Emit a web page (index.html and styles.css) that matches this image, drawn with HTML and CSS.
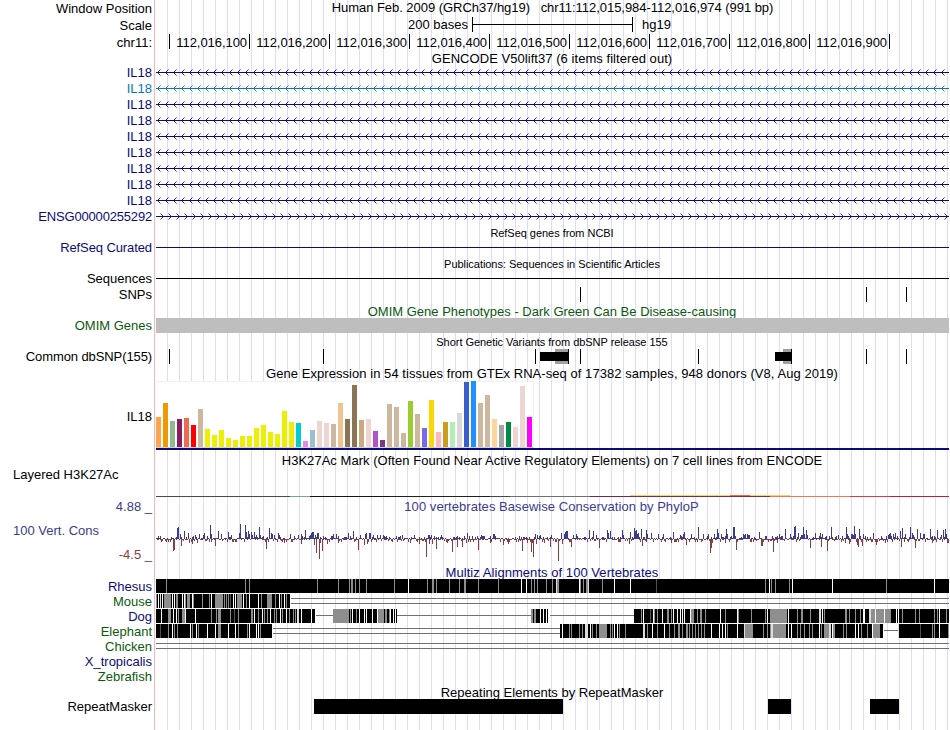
FILE: index.html
```html
<!doctype html>
<html>
<head>
  <meta charset="utf-8">
  <title>Human chr11:112,015,984-112,016,974</title>
  <link rel="stylesheet" href="styles.css">
</head>
<body>
<div class="browser">
  <div class="row position-row">
    <div class="label">Window Position</div>
    <div class="track center position-text">Human Feb. 2009 (GRCh37/hg19) &nbsp; chr11:112,015,984-112,016,974 (991 bp)</div>
  </div>
  <div class="row scale-row">
    <div class="label">Scale</div>
    <div class="track scale">
      <span class="scale-size">200 bases</span>
      <span class="scale-bar"></span>
      <span>hg19</span>
    </div>
  </div>
  <div class="row ruler-row">
    <div class="label">chr11:</div>
    <div class="track ruler">
      <span class="first"></span>
      <span>112,016,100</span>
      <span>112,016,200</span>
      <span>112,016,300</span>
      <span>112,016,400</span>
      <span>112,016,500</span>
      <span>112,016,600</span>
      <span>112,016,700</span>
      <span>112,016,800</span>
      <span>112,016,900</span>
    </div>
  </div>

  <div class="title gencode-title wide">GENCODE V50lift37 (6 items filtered out)</div>
  <div class="row navy"><div class="label">IL18</div><svg class="track gene" data-dir="left"></svg></div>
  <div class="row blue"><div class="label">IL18</div><svg class="track gene" data-dir="left"></svg></div>
  <div class="row navy"><div class="label">IL18</div><svg class="track gene" data-dir="left"></svg></div>
  <div class="row navy"><div class="label">IL18</div><svg class="track gene" data-dir="left"></svg></div>
  <div class="row navy"><div class="label">IL18</div><svg class="track gene" data-dir="left"></svg></div>
  <div class="row navy"><div class="label">IL18</div><svg class="track gene" data-dir="left"></svg></div>
  <div class="row navy"><div class="label">IL18</div><svg class="track gene" data-dir="left"></svg></div>
  <div class="row navy"><div class="label">IL18</div><svg class="track gene" data-dir="left"></svg></div>
  <div class="row navy"><div class="label">IL18</div><svg class="track gene" data-dir="left"></svg></div>
  <div class="row navy"><div class="label tighter">ENSG00000255292</div><svg class="track gene" data-dir="right"></svg></div>

  <div class="title small">RefSeq genes from NCBI</div>
  <div class="row navy"><div class="label tight">RefSeq Curated</div><svg class="track gene"></svg></div>

  <div class="title small">Publications: Sequences in Scientific Articles</div>
  <div class="row"><div class="label">Sequences</div><svg class="track gene"></svg></div>
  <div class="row">
    <div class="label">SNPs</div>
    <svg class="track" viewBox="156 0 793 16">
      <path d="M580 1h1v15h-1zM866 1h1v15h-1zM906 1h1v15h-1z"/>
    </svg>
  </div>

  <div class="title green">OMIM Gene Phenotypes - Dark Green Can Be Disease-causing</div>
  <div class="row green"><div class="label">OMIM Genes</div><div class="track omim"></div></div>

  <div class="title small">Short Genetic Variants from dbSNP release 155</div>
  <div class="row">
    <div class="label tight">Common dbSNP(155)</div>
    <svg class="track" viewBox="156 0 793 16">
      <path fill="#a0a0a0" d="M555 1h13v15h-13zM783 1h8v15h-8z"/>
      <path d="M540 4h28v9h-28zM775 4h16v9h-16z"/>
      <path d="M169 1h1v15h-1zM323 1h1v15h-1zM535 1h1v15h-1zM568 1h1v15h-1zM580 1h1v15h-1zM698 1h1v15h-1zM791 1h1v15h-1zM866 1h1v15h-1zM906 1h1v15h-1z"/>
    </svg>
  </div>

  <div class="title gtex-title wide">Gene Expression in 54 tissues from GTEx RNA-seq of 17382 samples, 948 donors (V8, Aug 2019)</div>
  <div class="row gtex-row">
    <div class="label">IL18</div>
    <div class="track gtex"><div class="gtex-bars" id="gtex"></div></div>
  </div>

  <div class="title histone-title">H3K27Ac Mark (Often Found Near Active Regulatory Elements) on 7 cell lines from ENCODE</div>
  <div class="row histone-row">
    <div class="label left">Layered H3K27Ac</div>
    <svg class="track" id="histone" viewBox="156 470 793 28"></svg>
  </div>

  <div class="row phylop-row">
    <div class="label phylop-labels">
      <span class="indigo">4.88 _</span>
      <span class="indigo left">100 Vert. Cons</span>
      <span class="maroon">-4.5 _</span>
    </div>
    <div class="track phylop">
      <div class="phylop-title indigo wide">100 vertebrates Basewise Conservation by PhyloP</div>
      <svg id="phylop" viewBox="156 516 793 49"></svg>
    </div>
  </div>

  <div class="title multiz-title navy wide">Multiz Alignments of 100 Vertebrates</div>
  <div class="row species navy"><div class="label">Rhesus</div><svg class="track" id="rhesus"></svg></div>
  <div class="row species green"><div class="label">Mouse</div><svg class="track" id="mouse"></svg></div>
  <div class="row species navy"><div class="label">Dog</div><svg class="track" id="dog"></svg></div>
  <div class="row species green"><div class="label">Elephant</div><svg class="track" id="elephant"></svg></div>
  <div class="row species green"><div class="label">Chicken</div><svg class="track" id="chicken"></svg></div>
  <div class="row species navy"><div class="label">X_tropicalis</div></div>
  <div class="row species green"><div class="label">Zebrafish</div></div>

  <div class="title repeat-title">Repeating Elements by RepeatMasker</div>
  <div class="row repeat-row">
    <div class="label">RepeatMasker</div>
    <svg class="track" viewBox="156 0 793 15">
      <path d="M314 0h249v15h-249zM768 0h23v15h-23zM870 0h29v15h-29z"/>
    </svg>
  </div>
</div>
<script src="tracks.js"></script>
</body>
</html>
```
FILE: styles.css
```css
html,
body {
  background: white;
  margin: 0;
}
.browser {
  /* pink edge of the label column, then a guide line every 12px */
  background:
    linear-gradient(#ffb4b4, #ffb4b4) 154px 0 / 1px 100% no-repeat,
    repeating-linear-gradient(to right, #dcdcff 0, #dcdcff 1px, transparent 1px, transparent 12px) 167px 0 no-repeat;
  box-sizing: border-box;
  color: black;
  font: 13px/16px "Liberation Sans", Arial, sans-serif;
  height: 730px;
  overflow: hidden;
  width: 950px;
}
.row {
  display: flex;
  height: 16px;
}
.label {
  box-sizing: border-box;
  flex: none;
  line-height: 17px;
  margin-right: 2px;
  padding-right: 2px;
  text-align: right;
  white-space: nowrap;
  width: 154px;
}
.label.left,
.label .left {
  padding-left: 13px;
  text-align: left;
}
.track {
  display: block;
  flex: none;
  height: 100%;
  shape-rendering: crispEdges;
  width: 793px;
}
.center {
  text-align: center;
}
.title {
  height: 15px;
  line-height: 19px;
  margin-left: 156px;
  text-align: center;
  white-space: nowrap;
  width: 792px;
}
.title.small {
  font-size: 11px;
  letter-spacing: -.04px;
}
.wide { letter-spacing: .05px; }
.tight { letter-spacing: -.1px; }
.tighter { letter-spacing: -.18px; }
.navy { color: #0c0c78; }
.blue { color: #0c78b4; }
.green { color: #0b5a0b; }
.indigo { color: #3c3c8c; }
.maroon { color: #8c3c3c; }

/* position, scale and ruler */
.position-row,
.scale-row {
  height: 17px;
}
.position-text {
  letter-spacing: -.04px;
  line-height: 15px;
}
.scale {
  display: flex;
  line-height: 15px;
}
.scale-size {
  text-align: right;
  width: 312px;
}
.scale-bar {
  background: linear-gradient(black, black) 0 7px / 100% 1px no-repeat;
  border-left: 1px solid black;
  border-right: 1px solid black;
  box-sizing: border-box;
  height: 15px;
  margin: 0 9px 0 4px;
  width: 161px;
}
.ruler {
  display: flex;
}
.ruler span {
  border-right: 1px solid black;
  box-sizing: border-box;
  height: 15px;
  letter-spacing: -.06px;
  line-height: 17px;
  padding-right: 2px;
  text-align: right;
  width: 80px;
}
.ruler .first {
  width: 14px;
}
.gencode-title {
  height: 14px;
  line-height: 17px;
}
.omim {
  background: #bebebe;
  height: 15px;
  margin-top: 1px;
}

/* gtex bar chart */
.gtex-title {
  height: 17px;
}
.gtex-row {
  height: 69px;
}
.gtex-row .label {
  line-height: 71px;
}
.gtex {
  border-bottom: 2px solid #0c0c78;
  box-sizing: border-box;
}
.gtex-bars {
  align-items: flex-end;
  background: white;
  border: 1px solid #f0f0f0;
  border-bottom-color: #d2d2d2;
  border-left: 0;
  box-sizing: border-box;
  display: flex;
  gap: 2px;
  height: 67px;
  width: 378px;
}
.gtex-bars div {
  flex: none;
  width: 5px;
}

.histone-title {
  height: 20px;
  letter-spacing: .035px;
  line-height: 22px;
}
.histone-row {
  height: 28px;
}
.histone-row .label {
  line-height: 10px;
}

/* conservation */
.phylop-row {
  height: 67px;
}
.phylop-labels {
  display: flex;
  flex-direction: column;
  gap: 8px;
  line-height: 17px;
}
.phylop-labels .left {
  line-height: 15px;
}
.phylop-title {
  height: 18px;
  line-height: 18px;
  margin-right: 2px;
  text-align: center;
}
.phylop svg {
  display: block;
  height: 49px;
  width: 793px;
}
.multiz-title {
  height: 14px;
  line-height: 15px;
}
.species {
  height: 15px;
}
.species .label {
  line-height: 15px;
}
.repeat-title {
  line-height: 17px;
}
.repeat-row {
  height: 15px;
}
.repeat-row .label {
  line-height: 15px;
}
```
FILE: tracks.js
```js
var LEFT = 156;
var RIGHT = 949;

function rect(x, y, w, h, color) {
  return '<rect x="' + x + '" y="' + y + '" width="' + w + '" height="' + h + '" fill="' + color + '"/>';
}

// genes: a line, with strand arrows every 8px
document.querySelectorAll('.gene').forEach(function (svg) {
  var dir = svg.dataset.dir;
  var out = rect(LEFT, 8, RIGHT - LEFT, 1, 'currentColor');
  var step = dir === 'left' ? 1 : -1;
  var near = '';
  var far = '';
  if (dir) {
    for (var x = dir === 'left' ? 157 : 163; x < RIGHT; x += 8) {
      for (var i = 1; i <= 2; i++) {
        near += 'M' + (x + step * i) + ' ' + (8 - i) + 'h1v1h-1zM' + (x + step * i) + ' ' + (8 + i) + 'h1v1h-1z';
      }
      far += 'M' + (x + step * 3) + ' 5h1v1h-1zM' + (x + step * 3) + ' 11h1v1h-1z';
    }
  }
  out += '<path d="' + near + '" fill="currentColor" opacity=".85"/>';
  out += '<path d="' + far + '" fill="currentColor" opacity=".45"/>';
  svg.setAttribute('viewBox', '156 0 793 16');
  svg.innerHTML = out;
});

// one bar per tissue, color:height
var tissues = '#ffa54f:30 #ee9a00:44 #8fbc8f:26 #8b1c62:28 #ee6a50:29 #ff0000:22 #cdb79e:38 ' +
  '#eeee00:18 #eeee00:12 #eeee00:17 #eeee00:9 #eeee00:7 #eeee00:11 #eeee00:11 #eeee00:19 #eeee00:22 ' +
  '#eeee00:15 #eeee00:13 #eeee00:36 #eeee00:25 #00cdcd:24 #ee82ee:6 #9ac0cd:17 #eed5d2:26 #eed5d2:24 ' +
  '#cdb79e:23 #eec591:44 #8b7355:28 #8b7355:62 #cdaa7d:27 #eed5d2:28 #b452cd:16 #7a378b:7 #cdb79e:43 ' +
  '#cdb79e:40 #cdb79e:14 #9acd32:46 #cdb79e:33 #7a67ee:19 #ffd700:47 #ffb6c1:15 #cd9b1d:25 #b4eeb4:25 ' +
  '#d9d9d9:34 #3a5fcd:65 #1e90ff:66 #cdb79e:44 #cdb79e:52 #ffd39b:28 #a6a6a6:22 #008b45:25 #eed5d2:20 ' +
  '#eed5d2:61 #ff00ff:30';
document.getElementById('gtex').innerHTML = tissues.split(' ').map(function (t) {
  var p = t.split(':');
  return '<div style="height:' + p[1] + 'px;background:' + p[0] + '"></div>';
}).join('');

// layered histone signal, nearly flat here
document.getElementById('histone').innerHTML = [
  [156, 496, 134, '#3c5050'], [290, 496, 20, '#78aa82'], [310, 496, 80, '#14141e'],
  [390, 496, 80, '#281e1e'], [470, 496, 20, '#1e1e1e'], [490, 496, 20, '#32504b'],
  [510, 496, 80, '#6e6e78'], [590, 496, 40, '#78283c'], [630, 496, 140, '#783237'],
  [630, 495, 100, '#ffcd78'], [730, 495, 20, '#f06e46'], [750, 495, 40, '#ffcd78'],
  [770, 496, 80, '#f0784b'], [850, 496, 40, '#e13c3c'], [890, 496, 59, '#be1e3c']
].map(function (s) { return rect(s[0], s[1], s[2], 1, s[3]); }).join('');

// conservation peaks, x:height
var up = '177:11 178:12 180:5 184:8 188:6 195:4 199:5 203:4 204:6 210:14 211:5 218:8 221:5 228:7 231:4 ' +
  '239:6 240:15 245:14 246:7 248:8 249:5 251:7 252:4 254:7 256:4 259:12 260:4 269:11 271:6 272:5 274:4 278:6 279:4 290:5 ' +
  '298:4 301:5 305:9 310:4 311:6 312:7 313:7 315:4 317:6 318:6 333:5 336:5 348:6 353:8 360:4 365:5 366:6 ' +
  '369:6 370:6 373:4 377:4 380:4 383:4 396:3 402:4 414:4 428:4 429:4 431:4 441:4 467:6 477:3 481:4 484:3 493:5 494:5 ' +
  '535:5 537:4 540:4 551:4 561:6 564:5 565:7 566:8 567:8 573:4 576:5 589:9 593:8 596:4 607:9 608:6 ' +
  '610:8 622:9 623:4 630:7 634:11 635:8 636:9 637:5 638:6 641:10 646:9 647:5 651:6 658:5 663:5 673:7 680:4 ' +
  '683:5 684:7 691:5 698:12 703:5 708:5 714:5 717:10 718:6 721:5 726:10 727:5 731:3 733:12 734:12 735:3 743:5 744:4 745:5 ' +
  '747:5 748:4 749:4 759:7 779:5 785:10 790:5 794:12 795:13 798:6 801:4 802:4 803:12 804:5 806:9 807:4 815:6 820:6 822:5 831:12 838:4 ' +
  '846:12 847:5 851:5 852:5 853:4 854:13 855:5 859:10 863:5 873:6 888:4 889:5 890:6 893:5 895:6 900:8 902:11 905:5 910:12 912:6 913:4 ' +
  '917:10 920:6 923:5 924:5 930:10 937:9 941:4 943:9 945:10 946:5';
var down = '173:12 174:11 181:7 189:4 192:5 197:4 211:3 215:7 232:3 266:10 284:4 301:5 314:6 316:14 319:20 320:4 ' +
  '322:12 327:5 338:4 358:11 364:6 367:5 410:4 419:5 426:18 429:5 432:5 436:10 447:4 452:13 457:8 462:8 466:4 ' +
  '478:11 490:4 503:6 508:5 522:12 527:4 531:13 532:4 533:18 536:5 544:4 550:8 558:22 562:5 571:8 599:9 618:3 619:3 620:3 629:5 ' +
  '642:7 646:3 671:4 686:6 710:14 711:9 712:4 725:4 736:11 751:3 761:7 762:7 773:13 777:4 810:9 821:8 827:12 845:4 ' +
  '849:5 857:6 858:8 862:7 876:6 885:4 901:8 904:3 915:9 932:4 947:4 948:4';

function peaks(s) {
  var map = {};
  s.split(' ').forEach(function (p) {
    var kv = p.split(':');
    map[kv[0]] = +kv[1];
  });
  return map;
}

(function () {
  var ups = peaks(up);
  var downs = peaks(down);
  var seed = 18;
  function rand() {
    seed = (seed * 16807) % 2147483647;
    return seed / 2147483647;
  }
  var out = '';
  for (var x = LEFT; x < RIGHT; x++) {
    var r = rand();
    // low background signal between the peaks
    var u = ups[x] || (r < .38 ? 1 : r < .54 ? 2 : r < .62 ? 3 : 0);
    var d = downs[x] || (ups[x] ? 0 : r > .86 ? 3 : r > .76 ? 2 : r > .3 ? 1 : 0);
    if (u) out += rect(x, 539 - u, 1, u, '#3c3c8c');
    if (d) out += rect(x, 539, 1, d, '#8c3c3c');
  }
  document.getElementById('phylop').innerHTML = out;
})();

// alignments. marks are x.width + shade
var shades = { g: '#8e8e8e', w: '#ffffff', l: '#dcdcdc', d: '#505050' };
var species = {
  rhesus: {
    blocks: [[156, 949]],
    marks: '166.1g 245.1g 249.1g 317.1g 338.1g 349.1g 351.2g 355.1g 359.1g 366.1g 394.1g 408.1w 427.1g 432.2g 436.1g ' +
      '449.1g 459.1g 464.2g 478.1g 498.1g 521.1w 526.1w 531.1g 534.1g 537.1g 546.1g 552.1g 556.1l 557.2g 579.1w 580.1g ' +
      '583.1g 586.2g 588.1l 602.1g 614.1w 630.1w 656.1d 765.1g 769.1w 771.1g 775.1g 789.1g 792.1w 832.1w 886.1g 934.1w'
  },
  mouse: {
    blocks: [[156, 290]],
    double: [[291, 949]],
    marks: '156.1g 158.1w 160.1l 162.1w 164.1g 165.6g 172.1w 174.1w 176.2g 182.1w 184.1w 185.1g 187.3g 192.1w 193.1g 202.1g ' +
      '209.1g 211.1w 215.3g 218.5g 224.1g 226.1g 228.1g 230.1d 233.1w 235.1w 237.5g 243.1w 246.1g 249.1w 258.1w 261.1g ' +
      '267.5g 275.1g 279.1w 281.1g 284.1w 286.1g'
  },
  dog: {
    blocks: [[156, 315], [333, 397], [531, 549], [634, 949]],
    single: [[316, 333], [397, 531], [550, 634]],
    marks: '161.1w 168.3g 173.1w 176.1w 178.1g 182.3g 185.1w 195.1w 211.1g 216.1g 218.3g 230.1g 234.1d 238.1g 251.2g 254.1w 258.1g ' +
      '262.1w 264.1g 267.1g 270.1w 274.1g 276.1g 280.1w 282.1g 286.1w 289.1g 293.1g 295.1g 297.2l 301.1w 311.1w ' +
      '333.16g 350.1g 352.1w 356.1g 359.1w 364.1w 366.1w 372.1w 377.1w 378.6g 385.2g 389.1g 390.1w 393.1w 395.1w ' +
      '531.2g 534.2g 540.1w 543.1w 546.1w 548.1w ' +
      '641.1g 643.1w 650.1d 653.1w 654.1g 657.1g 662.1w 667.2g 671.1g 673.1w 677.1w 680.1w 682.1w 684.1w 690.1w 691.3g 697.1g 700.2g ' +
      '705.1g 720.1w 725.1g 737.1w 738.1g 751.1g 765.1g 767.1w 770.2g 772.15g 788.1w 797.1g 801.2g 810.1g 819.2l 822.1w 824.1g ' +
      '845.2g 849.1g 855.1g 860.1g 863.2w 869.2l 871.20g 875.1w 884.1w 896.1w 898.1w 902.1g 915.1g 919.1g 934.1g 937.1g 939.1w 946.1g'
  },
  elephant: {
    blocks: [[156, 272], [560, 884], [898, 949]],
    double: [[273, 560]],
    single: [[884, 898]],
    marks: '160.1d 168.1g 172.1w 174.1g 177.1g 190.1w 192.1g 196.1w 198.1g 207.1w 215.1w 218.3g 228.1w 235.1w 238.1g 247.1g 249.1w ' +
      '256.1w 258.1w 260.1g 562.1w 569.1g 571.1g 579.1g 582.1g 585.3l 590.1w 592.1g 596.1g 599.8g 610.1g 612.1g 614.1w 617.1w ' +
      '619.1g 625.1g 643.2l 647.1g 652.1w 657.1g 664.1w 669.1g 674.1g 678.2g 682.1g 686.2g 689.1g 692.1g 695.1g 698.1g 701.1g 704.1g ' +
      '711.1w 719.1w 722.1w 725.1w 727.1g 737.1w 744.1l 745.8g 763.1g 767.1g 770.1g 771.2l 773.13g 788.1w 791.1w 797.1g 800.1g 804.1g ' +
      '809.1g 812.1g 819.1w 821.1g 824.5g 829.2l 832.1w 833.2g 843.1g 846.1g 855.1w 858.1w 861.1g 867.1g 872.1w 873.3g 876.4g 883.1w ' +
      '898.1l 920.1d 932.1g 934.1g 939.1w 948.1g'
  },
  chicken: { blocks: [], double: [[156, 949]], marks: '' }
};

Object.keys(species).forEach(function (name) {
  var s = species[name];
  var out = '';
  (s.single || []).forEach(function (g) {
    out += rect(g[0], 6, g[1] - g[0], 1, '#707070');
  });
  (s.double || []).forEach(function (g) {
    out += rect(g[0], 4, g[1] - g[0], 1, '#707070') + rect(g[0], 9, g[1] - g[0], 1, '#707070');
  });
  s.blocks.forEach(function (b) {
    out += rect(b[0], 0, b[1] - b[0], 14, '#000');
  });
  (s.marks ? s.marks.split(' ') : []).forEach(function (m) {
    var p = m.match(/(\d+)\.(\d+)(\w)/);
    out += rect(p[1], 0, p[2], 14, shades[p[3]]);
  });
  var svg = document.getElementById(name);
  svg.setAttribute('viewBox', '156 0 793 15');
  svg.innerHTML = out;
});
```
